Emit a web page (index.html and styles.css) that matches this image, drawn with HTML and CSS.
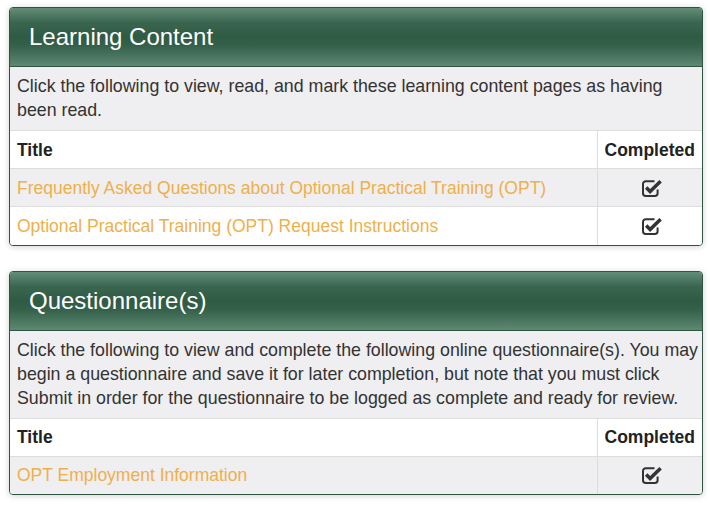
FILE: index.html
```html
<!DOCTYPE html>
<html>
<head>
<meta charset="utf-8">
<link rel="stylesheet" href="styles.css">
</head>
<body>
<div class="page">
  <section class="panel">
    <div class="panel-head">Learning Content</div>
    <div class="panel-desc">Click the following to view, read, and mark these learning content pages as having been read.</div>
    <table class="list">
      <tr class="head-row"><th class="c-title">Title</th><th class="c-done">Completed</th></tr>
      <tr class="odd"><td class="c-title"><a class="link">Frequently Asked Questions about Optional Practical Training (OPT)</a></td><td class="c-done"><svg class="chk" viewBox="0 0 22 18" width="22" height="18"><path d="M13.5 2.2H4.8A2.8 2.8 0 0 0 2 5V14.2A2.8 2.8 0 0 0 4.8 17H13.8A2.8 2.8 0 0 0 16.6 14.2V10.5" fill="none" stroke="#333" stroke-width="2"/><path d="M5.2 8.6L9.1 12.5L19.6 2.2" fill="none" stroke="#333" stroke-width="3.5"/></svg></td></tr>
      <tr class="even"><td class="c-title"><a class="link">Optional Practical Training (OPT) Request Instructions</a></td><td class="c-done"><svg class="chk" viewBox="0 0 22 18" width="22" height="18"><path d="M13.5 2.2H4.8A2.8 2.8 0 0 0 2 5V14.2A2.8 2.8 0 0 0 4.8 17H13.8A2.8 2.8 0 0 0 16.6 14.2V10.5" fill="none" stroke="#333" stroke-width="2"/><path d="M5.2 8.6L9.1 12.5L19.6 2.2" fill="none" stroke="#333" stroke-width="3.5"/></svg></td></tr>
    </table>
  </section>
  <section class="panel">
    <div class="panel-head">Questionnaire(s)</div>
    <div class="panel-desc">Click the following to view and complete the following online questionnaire(s). You may begin a questionnaire and save it for later completion, but note that you must click Submit in order for the questionnaire to be logged as complete and ready for review.</div>
    <table class="list">
      <tr class="head-row"><th class="c-title">Title</th><th class="c-done">Completed</th></tr>
      <tr class="odd"><td class="c-title"><a class="link">OPT Employment Information</a></td><td class="c-done"><svg class="chk" viewBox="0 0 22 18" width="22" height="18"><path d="M13.5 2.2H4.8A2.8 2.8 0 0 0 2 5V14.2A2.8 2.8 0 0 0 4.8 17H13.8A2.8 2.8 0 0 0 16.6 14.2V10.5" fill="none" stroke="#333" stroke-width="2"/><path d="M5.2 8.6L9.1 12.5L19.6 2.2" fill="none" stroke="#333" stroke-width="3.5"/></svg></td></tr>
    </table>
  </section>
</div>
</body>
</html>
```
FILE: styles.css
```css
html, body {
  margin: 0;
  padding: 0;
  background: #fff;
}
body {
  font-family: "Liberation Sans", Arial, sans-serif;
  font-size: 17px;
  color: #333;
}
.page {
  padding: 7px 7px 0 9px;
}
.panel {
  border: 1px solid #2d5540;
  border-radius: 4px;
  overflow: hidden;
  box-shadow: 0 1px 6px rgba(0, 0, 0, 0.18);
  margin-bottom: 25px;
  background: #fff;
}
.panel-head {
  height: 58px;
  display: flex;
  align-items: center;
  padding-left: 19px;
  font-size: 24px;
  color: #fff;
  background: linear-gradient(#628d78 0%, #3a654f 25%, #2f5a44 50%, #35604a 65%, #5e8873 100%);
  border-bottom: 1px solid #2d5540;
}
.panel-desc {
  background: #efeef1;
  padding: 7px 2px 8px 7px;
  line-height: 24px;
  font-size: 17.8px;
}
.list {
  width: 100%;
  border-collapse: collapse;
  font-size: 17.5px;
}
.list th, .list td {
  border-top: 1px solid #dddddd;
  height: 38px;
  padding: 0 7px;
  line-height: 20px;
  box-sizing: border-box;
}
.list th {
  font-weight: bold;
  color: #222;
  text-align: left;
}
.list .c-done {
  width: 105px;
  text-align: center;
  border-left: 1px solid #dddddd;
  padding: 0;
}
.list th.c-done {
  text-align: center;
}
.head-row {
  background: #fff;
}
.odd {
  background: #efeef1;
}
.even {
  background: #fff;
}
.link {
  color: #efb04b;
  text-decoration: none;
}
.chk {
  display: block;
  margin: 0 auto;
  position: relative;
  left: 2px;
}
```
